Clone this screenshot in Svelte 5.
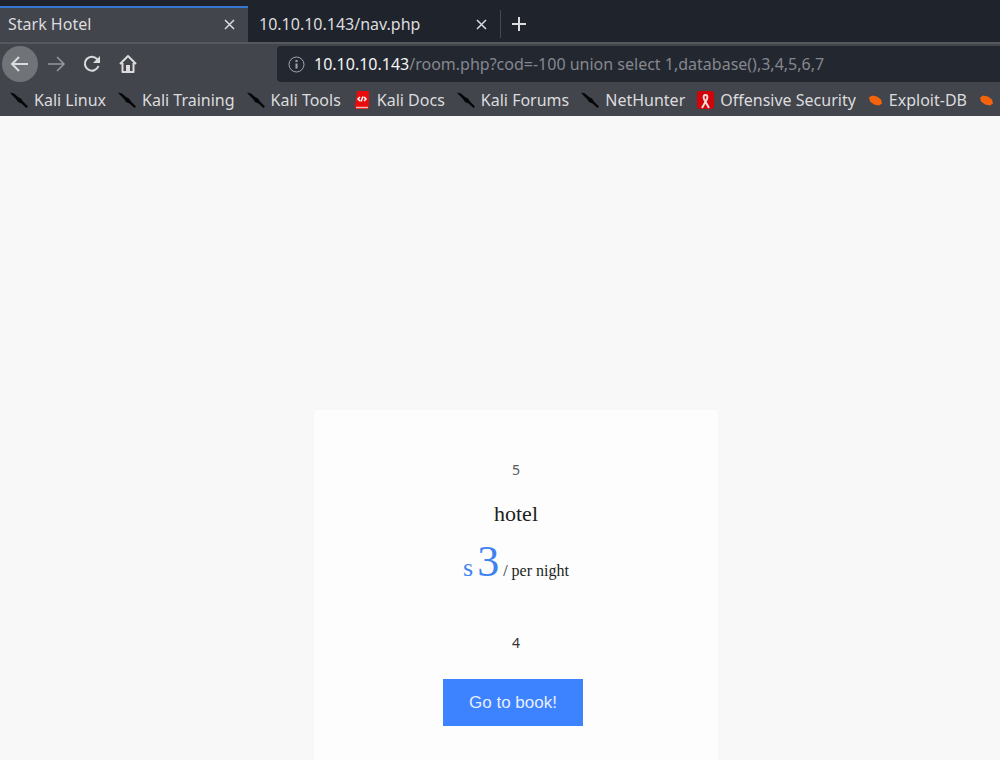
<script>
  let address = '/room.php?cod=-100 union select 1,database(),3,4,5,6,7';

  const tabs = [
    { title: 'Stark Hotel', active: true },
    { title: '10.10.10.143/nav.php', active: false },
  ];

  const bookmarks = [
    { name: 'Kali Linux', icon: 'kali' },
    { name: 'Kali Training', icon: 'kali' },
    { name: 'Kali Tools', icon: 'kali' },
    { name: 'Kali Docs', icon: 'docs' },
    { name: 'Kali Forums', icon: 'kali' },
    { name: 'NetHunter', icon: 'kali' },
    { name: 'Offensive Security', icon: 'offsec' },
    { name: 'Exploit-DB', icon: 'exploit' },
    { name: '', icon: 'exploit' },
  ];

  const room = { stars: 5, name: 'hotel', price: 3, descrip: 4 };
</script>

<div class="browser">
  <header>
    <div class="tabs">
      {#each tabs as tab (tab.title)}
        <div class="tab" class:active={tab.active}>
          <button class="title">{tab.title}</button>
          <button class="close" aria-label="Close tab">
            <svg width="11" height="11" viewBox="0 0 11 11"><path d="M1 1l9 9M10 1l-9 9" /></svg>
          </button>
        </div>
      {/each}
      <button class="new-tab" aria-label="New tab">
        <svg width="16" height="16" viewBox="0 0 16 16"><path d="M8 1v14M1 8h14" stroke-width="2" /></svg>
      </button>
    </div>

    <nav class="toolbar">
      <button class="back" aria-label="Back">
        <svg width="20" height="18" viewBox="0 0 20 18"><path d="M9 2L2 9l7 7M2 9h16" stroke-width="2" /></svg>
      </button>
      <button class="forward" aria-label="Forward">
        <svg width="20" height="18" viewBox="0 0 20 18"><path d="M11 2l7 7-7 7M18 9H2" /></svg>
      </button>
      <button aria-label="Reload">
        <svg width="18" height="18" viewBox="0 0 18 18">
          <path d="M14.5 4.5A7 7 0 1 0 15.5 11" stroke-width="2" />
          <path d="M17 1v7h-7z" fill="currentColor" stroke="none" />
        </svg>
      </button>
      <button aria-label="Home">
        <svg width="18" height="20" viewBox="0 0 18 20">
          <path d="M1 10l8-8 8 8M3.5 9v9h11V9" stroke-width="2" stroke-linejoin="round" />
          <path d="M7 17v-6h4v6z" fill="currentColor" stroke="none" />
        </svg>
      </button>
      <div class="urlbar">
        <svg width="17" height="17" viewBox="0 0 17 17">
          <circle cx="8.5" cy="8.5" r="7.5" />
          <path d="M8.5 7.5v5M8.5 4v2" stroke-width="2" />
        </svg>
        <label for="url">10.10.10.143</label>
        <input id="url" type="text" bind:value={address} spellcheck="false" />
      </div>
    </nav>

    <div class="bookmarks">
      {#each bookmarks as mark}
        <a href="#top" aria-label={mark.name || 'More'}>
          {#if mark.icon === 'kali'}
            <svg width="18" height="18" viewBox="0 0 18 18">
              <path d="M0 1.5l4 1 4 3.5 3 1.5 2 3 5 5-1.5 1.5-5-4.5-3.5-1.5-2-3L2 4z" fill="#050608" stroke="none" />
            </svg>
          {:else if mark.icon === 'docs'}
            <svg width="18" height="18" viewBox="0 0 18 18">
              <path d="M4 0h12v15l-1 3H3l-1-3z" fill="#e80c0c" stroke="none" />
              <path d="M3 16.5h12" stroke="#f1b3ac" />
              <path d="M7 6L5 8l2 2M11 6l2 2-2 2M10 5.5l-2 5" stroke="#fff" />
            </svg>
          {:else if mark.icon === 'offsec'}
            <svg width="17" height="18" viewBox="0 0 17 18">
              <rect width="17" height="18" rx="3" fill="#d2040b" stroke="none" />
              <path d="M5 17l5-9c1-3 0-4-1.5-4S6 5 7 8l5 9" stroke="#f5dcd2" stroke-width="2" />
            </svg>
          {:else}
            <svg width="15" height="18" viewBox="0 0 15 18">
              <path d="M1 6.5l3-2 5 1 4 3 1 4-3 2-5-1-4-3z" fill="#f4630b" stroke="none" />
            </svg>
          {/if}
          {mark.name}
        </a>
      {/each}
    </div>
  </header>

  <main>
    <section class="room">
      <span class="rating">{room.stars}</span>
      <h3>{room.name}</h3>
      <p class="price"><sub>s</sub> <strong>{room.price}</strong> <small>/ per night</small></p>
      <p class="descrip">{room.descrip}</p>
      <button class="book">Go to book!</button>
    </section>
  </main>
</div>

<style>
  :global(body) {
    margin: 0;
    background: #f8f8f9;
  }

  .browser {
    display: flex;
    flex-direction: column;
    height: 100vh;
    overflow: hidden;
    font-family: 'Noto Sans', sans-serif;
    color: #dcdcde;
  }

  button {
    padding: 0;
    border: none;
    background: none;
    color: inherit;
    font: inherit;
    cursor: pointer;
  }

  svg {
    display: block;
    flex: none;
    fill: none;
    stroke: currentColor;
    stroke-width: 1.5;
  }

  header {
    flex: none;
    background: #42454c;
  }

  .tabs {
    display: flex;
    padding-top: 6px;
    background: #1f232c;
  }

  .tab {
    display: flex;
    align-items: center;
    justify-content: space-between;
    box-sizing: border-box;
    width: 252px;
    height: 36px;
    padding: 0 13px 0 11px;
    font-size: 16px;
    line-height: 20px;
  }

  .tab.active {
    width: 248px;
    padding-left: 8px;
    border-top: 2px solid #3779d2;
    padding-bottom: 2px;
    background: #42454c;
  }

  .new-tab {
    margin: 4px 0;
    padding: 0 10px;
    border-left: 1px solid #454952;
  }

  .toolbar {
    display: flex;
    align-items: center;
    height: 40px;
    padding-left: 2px;
    border-top: 2px solid #55585d;
  }

  .toolbar button {
    display: grid;
    place-items: center;
    width: 36px;
    height: 36px;
  }

  .toolbar .back {
    border-radius: 50%;
    background: #707377;
  }

  .toolbar .forward {
    color: #96989c;
  }

  .urlbar {
    display: flex;
    flex: 1;
    align-items: center;
    height: 36px;
    margin-left: 131px;
    padding-left: 11px;
    border-radius: 4px 0 0 4px;
    background: #232730;
    font-size: 16px;
  }

  .urlbar svg {
    color: #a5a7ab;
    stroke-width: 1;
  }

  .urlbar label {
    margin-left: 9px;
    color: #f4f4f5;
  }

  .urlbar input {
    flex: 1;
    min-width: 0;
    padding: 0;
    border: none;
    outline: none;
    background: none;
    color: #85888e;
    font: inherit;
  }

  .bookmarks {
    display: flex;
    gap: 12px;
    height: 32px;
    padding-left: 10px;
    overflow: hidden;
    font-size: 16px;
  }

  .bookmarks a {
    display: flex;
    flex: none;
    align-items: center;
    gap: 6px;
    color: inherit;
    text-decoration: none;
  }

  main {
    display: grid;
    grid-template-columns: 314fr 404fr 282fr;
    flex: 1;
    padding-top: 294px;
  }

  .room {
    grid-column: 2;
    padding-top: 48px;
    background: #fdfdfd;
    color: #1c1d20;
    text-align: center;
  }

  .rating,
  .descrip {
    display: block;
    margin: 0;
    color: #5a5a5a;
    font-size: 14px;
    line-height: 24px;
  }

  h3 {
    margin: 20px 0 0;
    font: 22px/24px 'Liberation Serif', serif;
  }

  .price {
    margin: 12px 0 0;
    font: 16px/48px 'Liberation Serif', serif;
  }

  .price sub {
    color: #3f83ef;
    font-size: 26px;
    line-height: 1;
    vertical-align: baseline;
  }

  .price strong {
    color: #3f83ef;
    font-size: 44px;
    font-weight: 400;
  }

  .price small {
    font-size: 16px;
  }

  .descrip {
    margin: 36px 0 24px;
    color: #333;
  }

  .book {
    height: 47px;
    margin-right: 6px;
    padding: 0 26px;
    background: #3d82ff;
    color: #e6efff;
    font: 17px 'Liberation Sans', sans-serif;
  }
</style>
